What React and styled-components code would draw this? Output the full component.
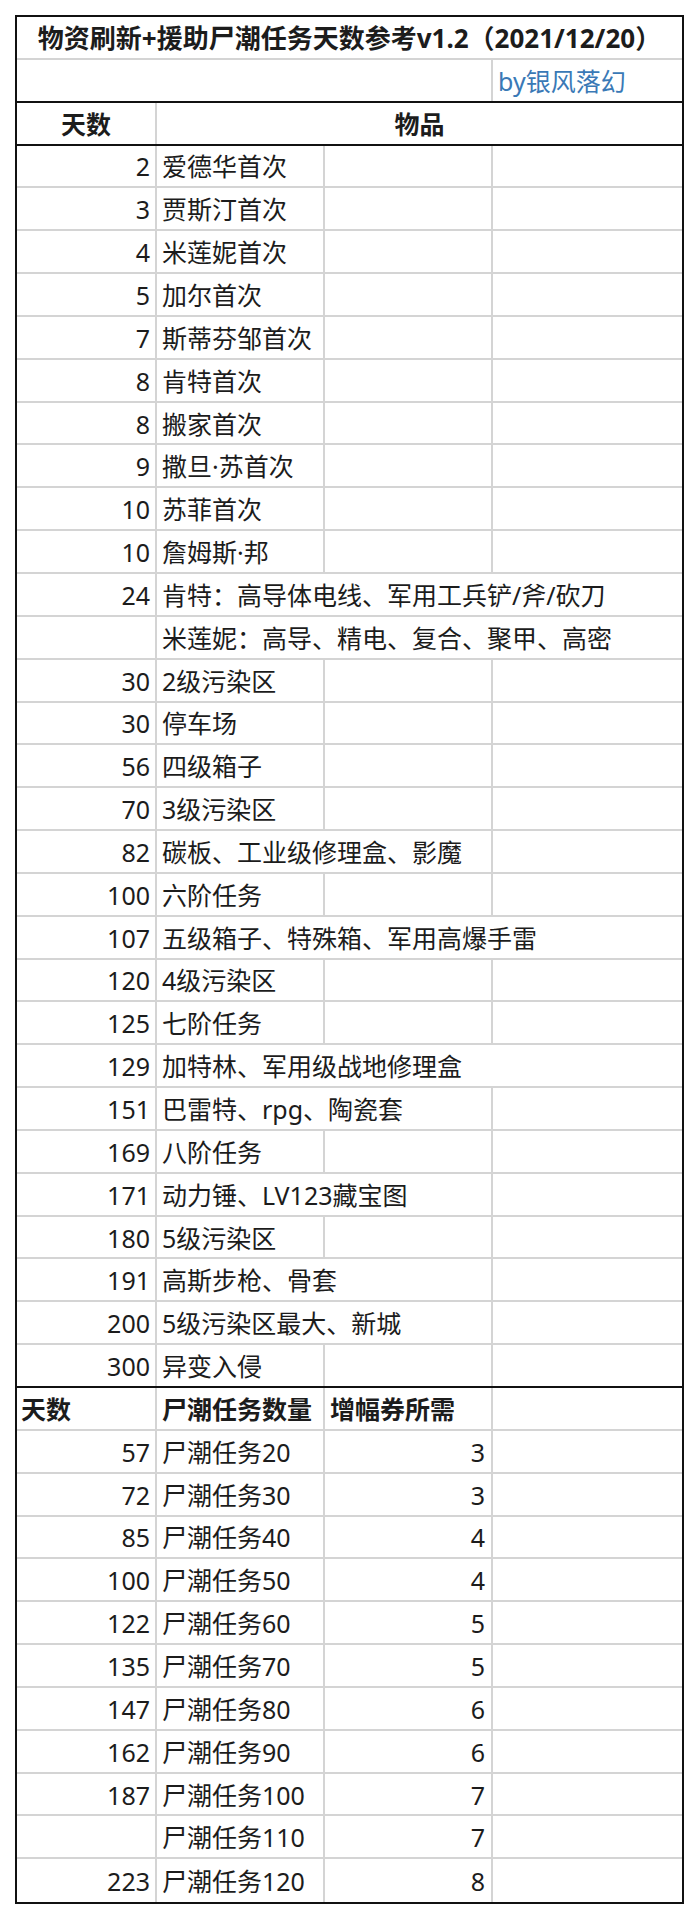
import React from 'react';
import styled, { createGlobalStyle } from 'styled-components';

const GlobalStyle = createGlobalStyle`
  body {
    margin: 0;
    background: #fff;
  }
`;

const Page = styled.div`
  width: 700px;
  padding: 15px 16px 16px 15px;
  box-sizing: border-box;
  background: #fff;
`;

const Sheet = styled.div`
  width: 669px;
  border: 2px solid #111;
  box-sizing: border-box;
  font-family: "Noto Sans", "Noto Sans CJK SC", sans-serif;
  color: #1c1c1c;
`;

const Row = styled.div`
  display: grid;
  grid-template-columns: 140px 168px 168px 1fr;
  height: 42.85px;
  box-sizing: border-box;
  border-bottom: 2px solid ${props => props.$strong ? '#111' : '#d4d4d4'};

  &:last-child {
    border-bottom: none;
  }
`;

const Cell = styled.div`
  grid-column: span ${props => props.$span || 1};
  display: flex;
  align-items: center;
  justify-content: ${props => props.$align || 'flex-start'};
  padding: 2px ${props => props.$pr ?? 5}px 0 ${props => props.$pl ?? 5}px;
  box-sizing: border-box;
  border-right: 2px solid #d4d4d4;
  font-size: ${props => props.$size || 25}px;
  font-weight: ${props => props.$bold ? 700 : 400};
  color: ${props => props.$color || 'inherit'};
  white-space: nowrap;
  overflow: visible;
  line-height: 1;

  &:last-child {
    border-right: none;
  }
`;

const items = [
  ['2', '爱德华首次', 1],
  ['3', '贾斯汀首次', 1],
  ['4', '米莲妮首次', 1],
  ['5', '加尔首次', 1],
  ['7', '斯蒂芬邹首次', 1],
  ['8', '肯特首次', 1],
  ['8', '搬家首次', 1],
  ['9', '撒旦·苏首次', 1],
  ['10', '苏菲首次', 1],
  ['10', '詹姆斯·邦', 1],
  ['24', '肯特：高导体电线、军用工兵铲/斧/砍刀', 3],
  ['', '米莲妮：高导、精电、复合、聚甲、高密', 3],
  ['30', '2级污染区', 1],
  ['30', '停车场', 1],
  ['56', '四级箱子', 1],
  ['70', '3级污染区', 1],
  ['82', '碳板、工业级修理盒、影魔', 2],
  ['100', '六阶任务', 1],
  ['107', '五级箱子、特殊箱、军用高爆手雷', 3],
  ['120', '4级污染区', 1],
  ['125', '七阶任务', 1],
  ['129', '加特林、军用级战地修理盒', 3],
  ['151', '巴雷特、rpg、陶瓷套', 2],
  ['169', '八阶任务', 1],
  ['171', '动力锤、LV123藏宝图', 2],
  ['180', '5级污染区', 1],
  ['191', '高斯步枪、骨套', 2],
  ['200', '5级污染区最大、新城', 2],
  ['300', '异变入侵', 1],
];

const waves = [
  ['57', '尸潮任务20', '3'],
  ['72', '尸潮任务30', '3'],
  ['85', '尸潮任务40', '4'],
  ['100', '尸潮任务50', '4'],
  ['122', '尸潮任务60', '5'],
  ['135', '尸潮任务70', '5'],
  ['147', '尸潮任务80', '6'],
  ['162', '尸潮任务90', '6'],
  ['187', '尸潮任务100', '7'],
  ['', '尸潮任务110', '7'],
  ['223', '尸潮任务120', '8'],
];

function App() {
  return (
    <>
      <GlobalStyle />
      <Page>
        <Sheet>
          <Row>
            <Cell $span={4} $align="center" $bold $size={26}>
              物资刷新+援助尸潮任务天数参考v1.2（2021/12/20）
            </Cell>
          </Row>
          <Row $strong>
            <Cell $span={3} />
            <Cell $color="#3a79b6">by银风落幻</Cell>
          </Row>
          <Row $strong>
            <Cell $align="center" $bold>天数</Cell>
            <Cell $span={3} $align="center" $bold>物品</Cell>
          </Row>
          {items.map(([day, text, span], i) => (
            <Row key={i} $strong={i === items.length - 1}>
              <Cell $align="flex-end">{day}</Cell>
              <Cell $span={span}>{text}</Cell>
              {Array.from({ length: 3 - span }).map((_, j) => (
                <Cell key={j} />
              ))}
            </Row>
          ))}
          <Row>
            <Cell $bold $pl={4}>天数</Cell>
            <Cell $bold>尸潮任务数量</Cell>
            <Cell $bold>增幅券所需</Cell>
            <Cell />
          </Row>
          {waves.map(([day, task, count], i) => (
            <Row key={i}>
              <Cell $align="flex-end">{day}</Cell>
              <Cell>{task}</Cell>
              <Cell $align="flex-end" $pr={6}>{count}</Cell>
              <Cell />
            </Row>
          ))}
        </Sheet>
      </Page>
    </>
  );
}

export default App;
